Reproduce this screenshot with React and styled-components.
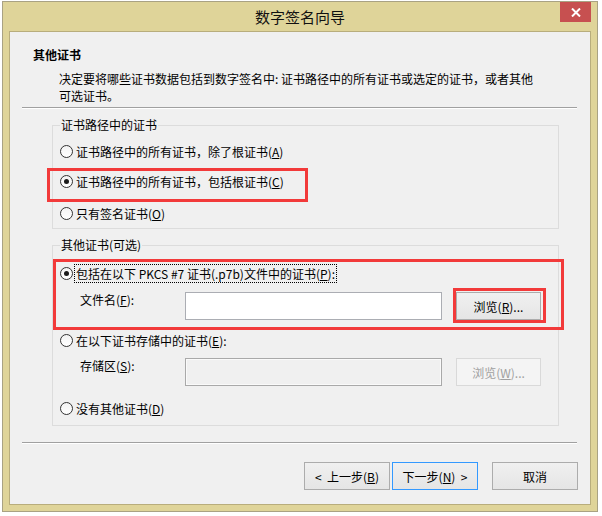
import React from 'react';
import styled, { createGlobalStyle, css } from 'styled-components';

const GlobalStyle = createGlobalStyle`
  html, body { margin: 0; padding: 0; background: #ffffff; }
  body { font-family: "Noto Sans CJK SC", "Noto Sans", sans-serif; color: #000; }
  * { box-sizing: border-box; }
`;

const Desktop = styled.div`
  width: 602px;
  height: 516px;
  padding: 1px 0 0 2px;
  overflow: hidden;
  background: #ffffff;
`;

const Window = styled.div`
  width: 596px;
  height: 511px;
  border: 1px solid #a9a283;
  background: #dfd499;
  padding: 0 6px 6px 6px;
  display: flex;
  flex-direction: column;
`;

const TitleBar = styled.div`
  height: 29px;
  display: grid;
  grid-template-columns: 1fr auto 1fr;
  align-items: start;
`;

const Title = styled.div`
  grid-column: 2;
  font-size: 15px;
  line-height: 29px;
  color: #111;
  white-space: nowrap;
`;

const CloseButton = styled.div`
  grid-column: 3;
  justify-self: end;
  width: 31px;
  height: 20px;
  background: #c75050;
  display: flex;
  align-items: center;
  justify-content: center;
`;

const Client = styled.div`
  flex: 1;
  border: 1px solid #b8ad7c;
  background: #f0f0f0;
  display: flex;
  flex-direction: column;
  padding-top: 15px;
  font-size: 12px;
`;

const HeaderTitle = styled.div`
  margin-left: 23px;
  font-weight: bold;
  font-size: 12px;
  line-height: 16px;
`;

const Description = styled.div`
  margin: 7px 0 0 49px;
  line-height: 17px;
  white-space: nowrap;
`;

const Separator = styled.div`
  height: 2px;
  margin: ${(p) => p.$top}px 13px 0 12px;
  border-top: 1px solid #a0a0a0;
  border-bottom: 1px solid #ffffff;
`;

const GroupBox = styled.fieldset`
  margin: ${(p) => p.$top}px 31px 0 42px;
  padding: ${(p) => p.$padTop}px 7px ${(p) => p.$padBottom}px 7px;
  border: 1px solid #dcdcdc;
  min-width: 0;
`;

const Legend = styled.legend`
  padding: 0 1px;
  font-size: 12px;
  line-height: 16px;
`;

const Annotated = styled.div`
  position: relative;
  ${(p) =>
    p.$mark &&
    css`
      &::after {
        content: '';
        position: absolute;
        pointer-events: none;
        border: 3px solid #f23a3a;
        top: ${p.$mark[0]}px;
        right: ${p.$mark[1]}px;
        bottom: ${p.$mark[2]}px;
        left: ${p.$mark[3]}px;
      }
    `}
`;

const RadioRow = styled.div`
  display: flex;
  align-items: center;
  height: 20px;
  gap: 1px;
  margin-top: ${(p) => p.$top || 0}px;
`;

const RadioCircle = styled.span`
  width: 13px;
  height: 13px;
  flex: none;
  border-radius: 50%;
  border: 1px solid #333333;
  background: linear-gradient(#f3f3f3, #ffffff);
  display: flex;
  align-items: center;
  justify-content: center;
  &::after {
    content: '';
    width: 5px;
    height: 5px;
    border-radius: 50%;
    background: ${(p) => (p.$checked ? '#1a1a1a' : 'transparent')};
  }
`;

const RadioText = styled.span`
  font-size: 12px;
  line-height: 17px;
  padding: 0 1px;
  border: 1px ${(p) => (p.$focused ? 'dotted #000' : 'solid transparent')};
  white-space: nowrap;
`;

const FieldRow = styled.div`
  display: flex;
  align-items: flex-start;
  padding-left: 20px;
  margin-top: ${(p) => p.$top}px;
`;

const FieldLabel = styled.span`
  width: 105px;
  flex: none;
  line-height: 16px;
`;

const TextBox = styled.div`
  width: 257px;
  height: 28px;
  flex: none;
  border: 1px solid ${(p) => (p.$disabled ? '#a9a9a9' : '#abadb3')};
  background: ${(p) => (p.$disabled ? '#f0f0f0' : '#ffffff')};
  box-shadow: ${(p) => (p.$disabled ? 'inset 0 0 0 1px #fafafa' : 'none')};
`;

const WinButton = styled.div`
  width: ${(p) => p.$w || 86}px;
  height: 28px;
  flex: none;
  display: flex;
  align-items: center;
  justify-content: center;
  font-size: 12px;
  white-space: pre;
  border: 1px solid ${(p) => (p.$disabled ? '#d9d9d9' : p.$primary ? '#3399ff' : '#acacac')};
  background: ${(p) =>
    p.$disabled ? '#f4f4f4' : 'linear-gradient(#f0f0f0, #e5e5e5)'};
  color: ${(p) => (p.$disabled ? '#a0a0a0' : '#000')};
`;

const ButtonSlot = styled(Annotated)`
  margin-left: 14px;
`;

const ButtonBar = styled.div`
  display: flex;
  justify-content: flex-end;
  margin-top: 18px;
  padding-right: 12px;
`;

const Gap = styled.span`
  width: ${(p) => p.$w}px;
  flex: none;
`;

const Radio = ({ checked, focused, children, top }) => (
  <RadioRow $top={top}>
    <RadioCircle $checked={checked} />
    <RadioText $focused={focused}>{children}</RadioText>
  </RadioRow>
);

export default function App() {
  return (
    <>
      <GlobalStyle />
      <Desktop>
        <Window>
          <TitleBar>
            <Title>数字签名向导</Title>
            <CloseButton>
              <svg width="10" height="9" viewBox="0 0 10 9">
                <path d="M1 0.5 L9 8.5 M9 0.5 L1 8.5" stroke="#fff" strokeWidth="2" />
              </svg>
            </CloseButton>
          </TitleBar>
          <Client>
            <HeaderTitle>其他证书</HeaderTitle>
            <Description>
              决定要将哪些证书数据包括到数字签名中: 证书路径中的所有证书或选定的证书，或者其他
              <br />
              可选证书。
            </Description>
            <Separator $top={3} />

            <GroupBox $top={8} $padTop={8} $padBottom={5}>
              <Legend>证书路径中的证书</Legend>
              <Radio>
                证书路径中的所有证书，除了根证书(<u>A</u>)
              </Radio>
              <Annotated $mark={[-3, 243, -11, -13]}>
                <Radio checked top={10}>
                  证书路径中的所有证书，包括根证书(<u>C</u>)
                </Radio>
              </Annotated>
              <Radio top={12}>
                只有签名证书(<u>O</u>)
              </Radio>
            </GroupBox>

            <GroupBox $top={8} $padTop={10} $padBottom={7}>
              <Legend>其他证书(可选)</Legend>
              <Annotated $mark={[-4, -13, -10, -7]}>
                <Radio checked focused>
                  包括在以下 PKCS #7 证书(.p7b)文件中的证书(<u>P</u>):
                </Radio>
                <FieldRow $top={9}>
                  <FieldLabel>
                    文件名(<u>F</u>):
                  </FieldLabel>
                  <TextBox />
                  <ButtonSlot $mark={[-4, -5, -3, -3]}>
                    <WinButton $w={85}>
                      浏览(<u>R</u>)...
                    </WinButton>
                  </ButtonSlot>
                </FieldRow>
              </Annotated>
              <Radio top={10}>
                在以下证书存储中的证书(<u>E</u>):
              </Radio>
              <FieldRow $top={8}>
                <FieldLabel>
                  存储区(<u>S</u>):
                </FieldLabel>
                <TextBox $disabled />
                <ButtonSlot>
                  <WinButton $w={85} $disabled>
                    浏览(<u>W</u>)...
                  </WinButton>
                </ButtonSlot>
              </FieldRow>
              <Radio top={12}>
                没有其他证书(<u>D</u>)
              </Radio>
            </GroupBox>

            <Separator $top={16} />
            <ButtonBar>
              <WinButton>
                {'<  上一步('}<u>B</u>{')'}
              </WinButton>
              <Gap $w={2} />
              <WinButton $primary>
                {'下一步('}<u>N</u>{')  >'}
              </WinButton>
              <Gap $w={14} />
              <WinButton>取消</WinButton>
            </ButtonBar>
          </Client>
        </Window>
      </Desktop>
    </>
  );
}
